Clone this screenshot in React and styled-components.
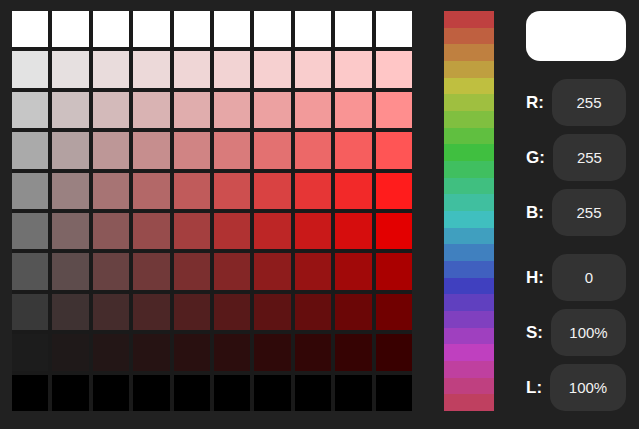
import React, { useState } from "react";
import styled, { createGlobalStyle } from "styled-components";

const GlobalStyle = createGlobalStyle`
    html, body {
        margin: 0;
        padding: 0;
        background: #212121;
        font-family: "Liberation Sans", Arial, sans-serif;
    }
`;

const Page = styled.div`
    display: flex;
    gap: 32px;
    padding: 11px 12px;
    align-items: flex-start;
`;

// 10x10 swatch grid: saturation across, lightness down
const Grid = styled.div`
    width: 400px;
    height: 400px;
    display: grid;
    grid-template-columns: repeat(10, 1fr);
    grid-template-rows: repeat(10, 1fr);
    gap: 4px;
    background: #1a1a1a;
`;

const Cell = styled.div`
    background: ${p => p.$color};
    cursor: pointer;
`;

const HueBar = styled.div`
    width: 50px;
    height: 400px;
    display: flex;
    flex-direction: column;
`;

const HueStripe = styled.div`
    flex: 1;
    background: ${p => p.$color};
    cursor: pointer;
`;

const Panel = styled.div`
    width: 100px;
    display: flex;
    flex-direction: column;
    gap: 18px;
`;

const Preview = styled.div`
    height: 50px;
    border-radius: 14px;
    background: ${p => p.$color};
`;

const Group = styled.div`
    display: flex;
    flex-direction: column;
    gap: 8px;
`;

const Row = styled.label`
    display: flex;
    align-items: center;
    gap: 8px;
`;

const Label = styled.span`
    color: #fff;
    font-size: 17px;
    font-weight: bold;
`;

const Field = styled.input`
    flex: 1;
    min-width: 0;
    height: 47px;
    box-sizing: border-box;
    border: none;
    outline: none;
    border-radius: 15px;
    background: #333;
    color: #f2f2f2;
    font-family: "Liberation Sans", Arial, sans-serif;
    font-size: 15px;
    text-align: center;
    padding: 0;
`;

const hslToRgb = (h, s, l) => {
    const a = s * Math.min(l, 1 - l);
    const f = n => {
        const k = (n + h / 30) % 12;
        return Math.round(255 * (l - a * Math.max(-1, Math.min(k - 3, 9 - k, 1))));
    };
    return [f(0), f(8), f(4)];
};

export default function App() {
    const [hue, setHue] = useState(0);
    const [sel, setSel] = useState({ s: 1, l: 1 });

    const [r, g, b] = hslToRgb(hue, sel.s, sel.l);

    const cells = [];
    for (let row = 0; row < 10; row++) {
        for (let col = 0; col < 10; col++) {
            const s = col / 9;
            const l = (9 - row) / 9;
            cells.push(
                <Cell
                    key={row + "-" + col}
                    $color={`hsl(${hue}, ${s * 100}%, ${l * 100}%)`}
                    onClick={() => setSel({ s, l })}
                />
            );
        }
    }

    return (
        <>
            <GlobalStyle />
            <Page>
                <Grid>{cells}</Grid>
                <HueBar>
                    {Array.from({ length: 24 }, (_, i) => (
                        <HueStripe
                            key={i}
                            $color={`hsl(${i * 15}, 50%, 50%)`}
                            onClick={() => setHue(i * 15)}
                        />
                    ))}
                </HueBar>
                <Panel>
                    <Preview $color={`rgb(${r}, ${g}, ${b})`} />
                    <Group>
                        <Row><Label>R:</Label><Field readOnly value={r} /></Row>
                        <Row><Label>G:</Label><Field readOnly value={g} /></Row>
                        <Row><Label>B:</Label><Field readOnly value={b} /></Row>
                    </Group>
                    <Group>
                        <Row><Label>H:</Label><Field readOnly value={hue} /></Row>
                        <Row><Label>S:</Label><Field readOnly value={Math.round(sel.s * 100) + "%"} /></Row>
                        <Row><Label>L:</Label><Field readOnly value={Math.round(sel.l * 100) + "%"} /></Row>
                    </Group>
                </Panel>
            </Page>
        </>
    );
}
